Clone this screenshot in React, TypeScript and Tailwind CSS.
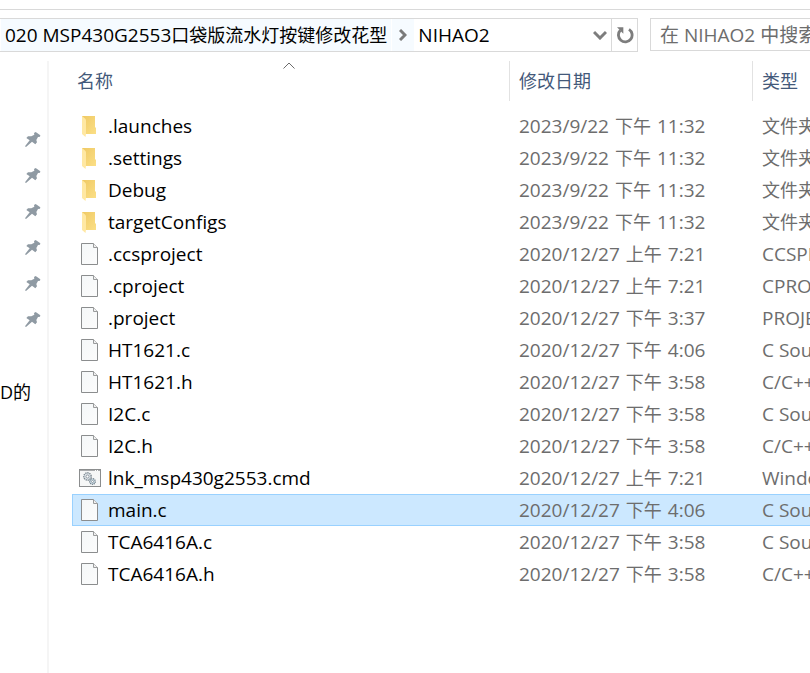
import type { ReactNode } from "react";

type Kind = "folder" | "file" | "cmd";

type Entry = {
  name: string;
  kind: Kind;
  day: string;
  half: string;
  time: string;
  type: string;
  selected?: boolean;
};

const entries: Entry[] = [
  { name: ".launches", kind: "folder", day: "2023/9/22", half: "下午", time: "11:32", type: "文件夹" },
  { name: ".settings", kind: "folder", day: "2023/9/22", half: "下午", time: "11:32", type: "文件夹" },
  { name: "Debug", kind: "folder", day: "2023/9/22", half: "下午", time: "11:32", type: "文件夹" },
  { name: "targetConfigs", kind: "folder", day: "2023/9/22", half: "下午", time: "11:32", type: "文件夹" },
  { name: ".ccsproject", kind: "file", day: "2020/12/27", half: "上午", time: "7:21", type: "CCSPROJECT" },
  { name: ".cproject", kind: "file", day: "2020/12/27", half: "上午", time: "7:21", type: "CPROJECT" },
  { name: ".project", kind: "file", day: "2020/12/27", half: "下午", time: "3:37", type: "PROJECT" },
  { name: "HT1621.c", kind: "file", day: "2020/12/27", half: "下午", time: "4:06", type: "C Source" },
  { name: "HT1621.h", kind: "file", day: "2020/12/27", half: "下午", time: "3:58", type: "C/C++ Header" },
  { name: "I2C.c", kind: "file", day: "2020/12/27", half: "下午", time: "3:58", type: "C Source" },
  { name: "I2C.h", kind: "file", day: "2020/12/27", half: "下午", time: "3:58", type: "C/C++ Header" },
  { name: "lnk_msp430g2553.cmd", kind: "cmd", day: "2020/12/27", half: "上午", time: "7:21", type: "Windows" },
  { name: "main.c", kind: "file", day: "2020/12/27", half: "下午", time: "4:06", type: "C Source", selected: true },
  { name: "TCA6416A.c", kind: "file", day: "2020/12/27", half: "下午", time: "3:58", type: "C Source" },
  { name: "TCA6416A.h", kind: "file", day: "2020/12/27", half: "下午", time: "3:58", type: "C/C++ Header" },
];

const pinned = [1, 2, 3, 4, 5, 6];

function Han({ children }: { children: ReactNode }) {
  return <span className="text-[18px]">{children}</span>;
}

function PinIcon() {
  return (
    <svg viewBox="0 0 48 48" className="size-4" fill="#8f9aa3" aria-hidden="true">
      <path d="M27 3 32 0 46 10 45 14 39 15 34 24 36 31 31 37 21 29 3 45 0 43 14 25 4 18 9 13 19 13 28 8Z" />
    </svg>
  );
}

function FolderIcon() {
  return (
    <svg width="16" height="22" viewBox="1 0 16 22" aria-hidden="true">
      <defs>
        <linearGradient id="folderBack" x1="0" y1="0" x2="1" y2="1">
          <stop offset="0" stopColor="#efc964" />
          <stop offset="1" stopColor="#fbdf86" />
        </linearGradient>
      </defs>
      <path d="M1 1H14V12L15 13V19H5L1 17Z" fill="url(#folderBack)" />
      <path d="M1 1 4 3.500Q5 4.300 5 5.500V18.500L4.500 22 1 19Z" fill="#ffe8a3" />
    </svg>
  );
}

function FileIcon() {
  return (
    <svg width="17" height="22" viewBox="0 0 17 22" aria-hidden="true">
      <defs>
        <linearGradient id="sheet" x1="0" y1="0" x2="1" y2="1">
          <stop offset="0" stopColor="#f4f7f8" />
          <stop offset="1" stopColor="#fcfcfc" />
        </linearGradient>
      </defs>
      <path d="M.5 .5H12.500L16.500 4.500V21.500H.5Z" fill="url(#sheet)" stroke="#8b8d8e" />
      <path d="M12.500 .5V4.500H16.500" fill="#f0f0f0" stroke="#9a9c9d" />
    </svg>
  );
}

function CmdIcon() {
  return (
    <svg width="22" height="18" viewBox="0 0 22 18" aria-hidden="true">
      <rect x=".5" y=".5" width="21" height="17" fill="#f6f7f7" stroke="#8b8d8e" />
      <path d="M1 1.500H21" stroke="#a9abad" />
      <path d="M16 1.500H20" stroke="#fff" strokeDasharray="1 1" />
      <circle cx="8.500" cy="7.500" r="3.700" fill="#dce3e8" stroke="#7d8890" strokeWidth="1.400" strokeDasharray="1.300 .8" />
      <circle cx="8.500" cy="7.500" r="1.500" fill="#fff" stroke="#7d8890" strokeWidth=".8" />
      <circle cx="13.500" cy="12.500" r="2.800" fill="#cfe0ea" stroke="#75838d" strokeWidth="1.300" strokeDasharray="1.200 .7" />
      <circle cx="13.500" cy="12.500" r="1" fill="#fff" stroke="#7d8890" strokeWidth=".7" />
    </svg>
  );
}

function EntryIcon({ kind }: { kind: Kind }) {
  if (kind === "folder") return <FolderIcon />;
  if (kind === "cmd") return <CmdIcon />;
  return <FileIcon />;
}

function AddressBar() {
  return (
    <div className="flex h-[34px] min-w-0 flex-1 border border-l-0 border-[#d9d9d9]">
      <nav aria-label="路径" className="flex min-w-0 flex-1 pl-px">
        <button type="button" className="shrink-0 bg-[#f6fbff] px-1 whitespace-nowrap">
          020 MSP430G2553<Han>口袋版流水灯按键修改花型</Han>
        </button>
        <span className="flex w-[23px] shrink-0 items-center justify-center border-l border-white bg-[#f6fbff]">
          <svg width="8" height="12" viewBox="0 0 8 12" fill="none" stroke="#7a7a7a" strokeWidth="3" aria-hidden="true">
            <path d="M1 1 6 6 1 11" />
          </svg>
        </span>
        <button type="button" className="shrink-0 px-1">
          NIHAO2
        </button>
      </nav>
      <button type="button" aria-label="以前的位置" className="flex w-[22px] shrink-0 items-center justify-center">
        <svg width="14" height="10" viewBox="0 0 14 10" fill="none" stroke="#7d7d7d" strokeWidth="3" aria-hidden="true">
          <path d="M1 2 7 8 13 2" />
        </svg>
      </button>
      <button
        type="button"
        aria-label="刷新"
        className="flex w-[26px] shrink-0 items-center justify-center border-l border-[#d9d9d9]"
      >
        <svg width="18" height="18" viewBox="0 0 54 54" aria-hidden="true">
          <path d="M39 10A20.500 20.500 0 1 1 13 13" fill="none" stroke="#7d7d7d" strokeWidth="8.500" />
          <path d="M3 4H22V23L16 17 9 10Z" fill="#7d7d7d" />
        </svg>
      </button>
    </div>
  );
}

export default function App() {
  return (
    <div className="flex min-h-screen flex-col overflow-hidden bg-white pt-[9px] font-['Open_Sans','Noto_Sans_CJK_SC',sans-serif] text-[19px] leading-[26px] text-black">
      <header className="flex gap-3 border-t border-[#d9d9d9] pt-2">
        <AddressBar />
        <input
          type="text"
          aria-label="搜索"
          placeholder="在 NIHAO2 中搜索"
          className="h-[33px] w-40 shrink-0 border border-r-0 border-[#d9d9d9] pl-[9px] outline-none placeholder:text-[#6d6d6d]"
        />
      </header>

      <div className="flex flex-1 pt-[9px]">
        <aside className="w-[49px] shrink-0 border-r-2 border-[#f5f5f5] pt-[61px]">
          <ul>
            {pinned.map((n) => (
              <li key={n} className="flex h-9 items-center justify-end pr-[6px]">
                <PinIcon />
              </li>
            ))}
          </ul>
          <a href="#drive" className="mt-9 flex h-9 items-center whitespace-nowrap text-[18px]">
            D的
          </a>
        </aside>

        <main className="min-w-0 flex-1 pl-[23px]">
          <table className="w-full table-fixed border-separate border-spacing-0 text-left whitespace-nowrap">
            <thead className="text-[18px] text-[#43597a]">
              <tr className="h-10">
                <th className="relative border-r border-[#e2e2e2] p-0 font-normal">
                  <svg
                    width="12"
                    height="7"
                    viewBox="0 0 12 7"
                    fill="none"
                    stroke="#6b6b6b"
                    className="absolute top-px left-1/2 -translate-x-2"
                    aria-hidden="true"
                  >
                    <path d="M.5 6.500 6 1 11.500 6.500" />
                  </svg>
                  <button type="button" className="w-full pl-[5px] text-left">
                    名称
                  </button>
                </th>
                <th className="w-[243px] border-r border-[#e2e2e2] p-0 font-normal">
                  <button type="button" className="w-full pl-[9px] text-left">
                    修改日期
                  </button>
                </th>
                <th className="w-[57px] p-0 font-normal">
                  <button type="button" className="w-full pl-[9px] text-left">
                    类型
                  </button>
                </th>
              </tr>
            </thead>
            <tbody className="before:block before:h-[9px]">
              {entries.map((e) => {
                const edge = e.selected ? "border-[#99d1ff] bg-[#cce8ff]" : "border-transparent";
                return (
                  <tr key={e.name} className="h-8" aria-selected={e.selected}>
                    <td className={`border-y border-l p-0 ${edge}`}>
                      <div className="flex items-center gap-[7px] pl-[5px]">
                        <span className="flex w-[23px] shrink-0 justify-center">
                          <EntryIcon kind={e.kind} />
                        </span>
                        {e.name}
                      </div>
                    </td>
                    <td className={`border-y p-0 pl-[9px] text-[#6d6d6d] ${edge}`}>
                      <span className="flex gap-[6px]">
                        <span>{e.day}</span>
                        <Han>{e.half}</Han>
                        <span>{e.time}</span>
                      </span>
                    </td>
                    <td className={`overflow-hidden border-y p-0 pl-[9px] text-[#6d6d6d] ${edge}`}>
                      {e.kind === "folder" ? <Han>{e.type}</Han> : e.type}
                    </td>
                  </tr>
                );
              })}
            </tbody>
          </table>
        </main>
      </div>
    </div>
  );
}
